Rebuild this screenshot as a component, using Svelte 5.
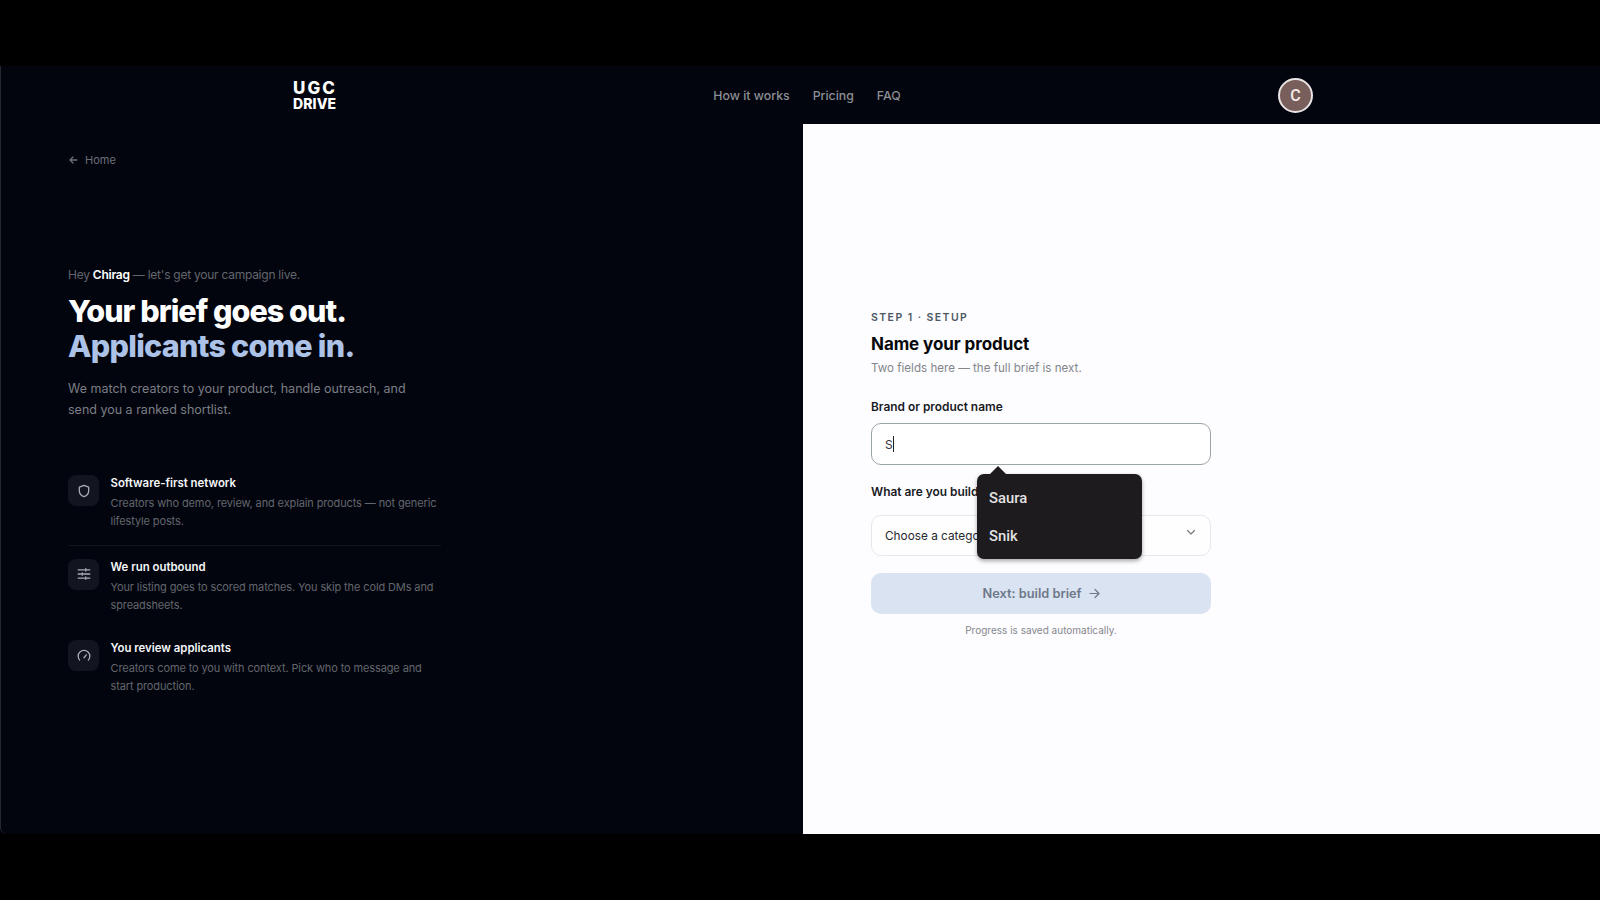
<script lang="ts">
    const navLinks = ['How it works', 'Pricing', 'FAQ'];

    const features = [
        { icon: 'shield', title: 'Software-first network', lines: ['Creators who demo, review, and explain products — not generic', 'lifestyle posts.'] },
        { icon: 'sliders', title: 'We run outbound', lines: ['Your listing goes to scored matches. You skip the cold DMs and', 'spreadsheets.'] },
        { icon: 'gauge', title: 'You review applicants', lines: ['Creators come to you with context. Pick who to message and', 'start production.'] }
    ];

    const suggestions = ['Saura', 'Snik'];

    let brand = $state('S');
</script>

<div class="screen">
    <div class="window">
        <header>
            <a class="logo" href="#home"><span class="ugc">UGC</span><span class="drive">DRIVE</span></a>
            <nav>
                {#each navLinks as label}
                    <a href="#top">{label}</a>
                {/each}
            </nav>
            <div class="avatar">C</div>
        </header>

        <main>
            <section class="intro">
                <a class="back" href="#home">
                    <svg width="10" height="10" viewBox="0 0 10 10" fill="none" stroke="currentColor" stroke-width="1.3" stroke-linecap="round" stroke-linejoin="round">
                        <path d="M9 5H2M5 2L2 5l3 3" />
                    </svg>
                    <span>Home</span>
                </a>

                <p class="hey">Hey <strong>Chirag</strong> — let's get your campaign live.</p>
                <h1><span class="first">Your brief goes out.</span><span class="accent">Applicants come in.</span></h1>
                <p class="lead">We match creators to your product, handle outreach, and<br />send you a ranked shortlist.</p>

                <ul>
                    {#each features as f}
                        <li>
                            <div class="icon">
                                <svg width="14" height="14" viewBox="0 0 24 24" fill="none" stroke="currentColor" stroke-width="2.2" stroke-linecap="round" stroke-linejoin="round">
                                    {#if f.icon === 'shield'}
                                        <path d="M12 2.5l8 3v6.5c0 5-3.5 8-8 9.8c-4.5-1.8-8-4.8-8-9.8V5.5z" />
                                    {:else if f.icon === 'sliders'}
                                        <path d="M2 5h11M17 5h5M15 3v4M2 12h5M11 12h11M9 10v4M2 19h11M17 19h5M15 17v4" />
                                    {:else}
                                        <path d="M4.5 19a10 10 0 1 1 15 0M12 15l4-5" />
                                    {/if}
                                </svg>
                            </div>
                            <div class="copy">
                                <h3>{f.title}</h3>
                                <p>{f.lines[0]}<br />{f.lines[1]}</p>
                            </div>
                        </li>
                    {/each}
                </ul>
            </section>

            <section class="setup">
                <form>
                    <p class="step">STEP 1 · SETUP</p>
                    <h2>Name your product</h2>
                    <p class="hint">Two fields here — the full brief is next.</p>

                    <span class="label">Brand or product name</span>
                    <div class="field">
                        <span>{brand}</span><i class="caret"></i>
                        <div class="suggest">
                            {#each suggestions as s}
                                <div>{s}</div>
                            {/each}
                        </div>
                    </div>

                    <span class="label second">What are you building?</span>
                    <div class="select">
                        <span>Choose a category</span>
                        <svg width="10" height="10" viewBox="0 0 10 10" fill="none" stroke="currentColor" stroke-width="1.2" stroke-linecap="round" stroke-linejoin="round">
                            <path d="M1.5 3.5L5 7l3.5-3.5" />
                        </svg>
                    </div>

                    <button type="button">
                        <span>Next: build brief</span>
                        <svg width="11" height="11" viewBox="0 0 11 11" fill="none" stroke="currentColor" stroke-width="1.2" stroke-linecap="round" stroke-linejoin="round">
                            <path d="M1 5.5h9M6 1.5l4 4l-4 4" />
                        </svg>
                    </button>
                    <p class="saved">Progress is saved automatically.</p>
                </form>
            </section>
        </main>
    </div>
</div>

<style>
    :global(body) { background: #000; }
    * { box-sizing: border-box; }
    h1, h2, h3, p, ul { margin: 0; padding: 0; }
    a { color: inherit; text-decoration: none; }
    svg { display: block; flex: none; }

    .screen {
        height: 900px;
        padding: 66px 0;
        overflow: hidden;
        background: #000;
        font-family: Inter, "Liberation Sans", sans-serif;
        white-space: nowrap;
    }
    .window {
        height: 768px;
        display: flex;
        flex-direction: column;
        background: #02050e;
        border-left: 1px solid #24272d;
        border-bottom-left-radius: 6px;
    }

    header {
        height: 58px;
        flex: none;
        display: grid;
        grid-template-columns: 1fr auto 1fr;
        align-items: center;
        padding: 0 287px 0 292px;
    }
    .logo { display: flex; flex-direction: column; color: #fff; font-weight: 800; }
    .ugc { font-size: 17px; line-height: 16px; letter-spacing: 2.1px; }
    .drive { font-size: 14px; line-height: 15px; letter-spacing: 0.1px; }
    nav { display: flex; gap: 23px; padding-left: 8px; color: #8c8e94; font-size: 12.3px; font-weight: 500; }
    .avatar {
        justify-self: end;
        width: 35px;
        height: 35px;
        border: 2px solid #e9e4e4;
        border-radius: 50%;
        background: #795f5b;
        color: #f6ece9;
        font: 500 16px/32px Roboto, sans-serif;
        text-align: center;
    }

    main { flex: 1; display: grid; grid-template-columns: 802px 1fr; }

    .intro { padding: 27px 0 0 67px; color: #62656d; }
    .back { display: flex; align-items: center; gap: 7px; height: 18px; font-size: 11px; color: #6c6f77; }
    .hey { margin-top: 96px; font-size: 12px; line-height: 20px; letter-spacing: -0.25px; }
    .hey strong { color: #fff; font-weight: 600; }
    h1 { margin-top: 8px; font-size: 30.5px; line-height: 35px; font-weight: 800; letter-spacing: -0.95px; color: #fff; }
    h1 span { display: block; }
    h1 .accent { color: #acc2e6; letter-spacing: -0.72px; }
    .lead { margin-top: 15px; font-size: 12.5px; line-height: 21px; color: #7b7e85; }

    ul { width: 373px; margin-top: 42px; list-style: none; }
    li { display: flex; gap: 11.5px; height: 82.5px; padding-top: 13px; }
    li:nth-child(2) { border-top: 1px solid #10141d; padding-top: 13px; }
    .icon {
        width: 31px;
        height: 31px;
        flex: none;
        display: grid;
        place-items: center;
        border-radius: 8px;
        background: #12151f;
        color: #a9aeb9;
    }
    h3 { font-size: 11.4px; line-height: 17px; font-weight: 600; color: #f5f6f8; }
    .copy p { margin-top: 2px; font-size: 11px; line-height: 18px; letter-spacing: -0.12px; }

    .setup { padding: 185px 0 0 68px; background: #fdfcff; }
    form { width: 340px; display: flex; flex-direction: column; }
    .step { font-size: 10.5px; line-height: 18px; font-weight: 600; letter-spacing: 1.43px; color: #4b5862; }
    h2 { margin-top: 5px; font-size: 17px; line-height: 24px; font-weight: 700; letter-spacing: -0.08px; color: #07080b; }
    .hint { margin-top: 3px; font-size: 11.6px; line-height: 18px; color: #83868b; }
    .label { margin-top: 21px; font-size: 11.9px; line-height: 18px; font-weight: 600; color: #17191e; }
    .field {
        position: relative;
        display: flex;
        align-items: center;
        height: 42px;
        margin-top: 7px;
        padding-left: 13px;
        border: 1.5px solid #9ba4a8;
        border-radius: 10px;
        background: #fff;
        font-size: 12px;
        color: #33363b;
    }
    .caret { width: 1px; height: 16px; background: #222; }
    .suggest {
        position: absolute;
        z-index: 2;
        top: 50px;
        left: 105px;
        width: 165px;
        height: 85px;
        padding: 5px 12px;
        border-radius: 7px;
        background: #1d1b1e;
        box-shadow: 0 2px 4px rgba(0, 0, 0, 0.35);
        color: #e3e2e4;
        font: 500 14.8px/38px Roboto, sans-serif;
    }
    .suggest::before {
        content: '';
        position: absolute;
        top: -8px;
        left: 12px;
        border: solid transparent;
        border-width: 0 9px 9px;
        border-bottom-color: #1d1b1e;
    }
    .label.second { margin-top: 18px; }
    .select {
        display: flex;
        align-items: center;
        justify-content: space-between;
        height: 41px;
        margin-top: 14px;
        padding: 0 14px 0 13px;
        border: 1px solid #e7e7eb;
        border-radius: 10px;
        background: #fefeff;
        font-size: 11.8px;
        color: #26292e;
    }
    .select svg { color: #777b80; margin-bottom: 7px; }
    button {
        display: flex;
        align-items: center;
        justify-content: center;
        gap: 7px;
        height: 41px;
        margin-top: 17px;
        border: 0;
        border-radius: 10px;
        background: #dae3f2;
        color: #6d7889;
        font: 600 12.8px/20px Inter, sans-serif;
    }
    .saved { margin-top: 7px; font-size: 10px; line-height: 18px; text-align: center; color: #85888d; }
</style>
